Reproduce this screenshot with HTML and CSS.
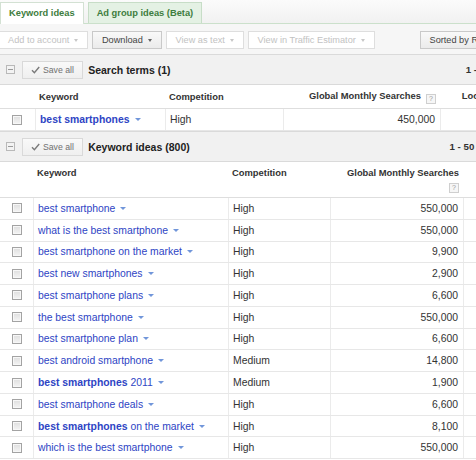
FILE: index.html
```html
<!DOCTYPE html>
<html>
<head>
<meta charset="utf-8">
<link rel="stylesheet" href="styles.css">
</head>
<body>
<div class="page">
  <div class="tabs">
    <div class="tab active">Keyword ideas</div>
    <div class="tab">Ad group ideas (Beta)</div>
  </div>

  <div class="toolbar">
    <span class="btn disabled first">Add to account<i class="caret"></i></span>
    <span class="btn">Download<i class="caret"></i></span>
    <span class="btn disabled">View as text<i class="caret"></i></span>
    <span class="btn disabled">View in Traffic Estimator<i class="caret"></i></span>
    <span class="btn sort">Sorted by Relevance<i class="caret"></i></span>
  </div>

  <div class="section-head">
    <span class="collapse"></span>
    <span class="save"><svg class="check" width="9" height="8" viewBox="0 0 9 8"><path d="M1 4.3 L3.4 6.8 L8.2 1" fill="none" stroke="#7a7a7a" stroke-width="1.4"/></svg>Save all</span>
    <span class="title">Search terms (1)</span>
    <span class="pager">1 - 1 of 1</span>
  </div>

  <div class="grid t1">
    <div class="hrow">
      <div class="hc"></div>
      <div class="hc">Keyword</div>
      <div class="hc">Competition</div>
      <div class="hc num">Global Monthly Searches <span class="help">?</span></div>
      <div class="hc num">Local Monthly Searches <span class="help">?</span></div>
    </div>
    <div class="row">
      <div class="c cb"><span class="box"></span></div>
      <div class="c"><a class="kw"><b>best smartphones</b><i class="dd"></i></a></div>
      <div class="c">High</div>
      <div class="c num">450,000</div>
      <div class="c num">135,000</div>
    </div>
  </div>

  <div class="section-head second">
    <span class="collapse"></span>
    <span class="save"><svg class="check" width="9" height="8" viewBox="0 0 9 8"><path d="M1 4.3 L3.4 6.8 L8.2 1" fill="none" stroke="#7a7a7a" stroke-width="1.4"/></svg>Save all</span>
    <span class="title">Keyword ideas (800)</span>
    <span class="pager">1 - 50 of 800</span>
  </div>

  <div class="grid t2">
    <div class="hrow tall">
      <div class="hc"></div>
      <div class="hc">Keyword</div>
      <div class="hc">Competition</div>
      <div class="hc num">Global Monthly Searches <span class="help">?</span></div>
      <div class="hc num">Local Monthly Searches <span class="help">?</span></div>
    </div>
    <div class="row"><div class="c cb"><span class="box"></span></div><div class="c"><a class="kw">best smartphone<i class="dd"></i></a></div><div class="c">High</div><div class="c num">550,000</div><div class="c num">165,000</div></div>
    <div class="row"><div class="c cb"><span class="box"></span></div><div class="c"><a class="kw">what is the best smartphone<i class="dd"></i></a></div><div class="c">High</div><div class="c num">550,000</div><div class="c num">165,000</div></div>
    <div class="row"><div class="c cb"><span class="box"></span></div><div class="c"><a class="kw">best smartphone on the market<i class="dd"></i></a></div><div class="c">High</div><div class="c num">9,900</div><div class="c num">3,600</div></div>
    <div class="row"><div class="c cb"><span class="box"></span></div><div class="c"><a class="kw">best new smartphones<i class="dd"></i></a></div><div class="c">High</div><div class="c num">2,900</div><div class="c num">1,300</div></div>
    <div class="row"><div class="c cb"><span class="box"></span></div><div class="c"><a class="kw">best smartphone plans<i class="dd"></i></a></div><div class="c">High</div><div class="c num">6,600</div><div class="c num">4,400</div></div>
    <div class="row"><div class="c cb"><span class="box"></span></div><div class="c"><a class="kw">the best smartphone<i class="dd"></i></a></div><div class="c">High</div><div class="c num">550,000</div><div class="c num">165,000</div></div>
    <div class="row"><div class="c cb"><span class="box"></span></div><div class="c"><a class="kw">best smartphone plan<i class="dd"></i></a></div><div class="c">High</div><div class="c num">6,600</div><div class="c num">4,400</div></div>
    <div class="row"><div class="c cb"><span class="box"></span></div><div class="c"><a class="kw">best android smartphone<i class="dd"></i></a></div><div class="c">Medium</div><div class="c num">14,800</div><div class="c num">6,600</div></div>
    <div class="row"><div class="c cb"><span class="box"></span></div><div class="c"><a class="kw"><b>best smartphones</b> 2011<i class="dd"></i></a></div><div class="c">Medium</div><div class="c num">1,900</div><div class="c num">880</div></div>
    <div class="row"><div class="c cb"><span class="box"></span></div><div class="c"><a class="kw">best smartphone deals<i class="dd"></i></a></div><div class="c">High</div><div class="c num">6,600</div><div class="c num">3,600</div></div>
    <div class="row"><div class="c cb"><span class="box"></span></div><div class="c"><a class="kw"><b>best smartphones</b> on the market<i class="dd"></i></a></div><div class="c">High</div><div class="c num">8,100</div><div class="c num">2,900</div></div>
    <div class="row"><div class="c cb"><span class="box"></span></div><div class="c"><a class="kw">which is the best smartphone<i class="dd"></i></a></div><div class="c">High</div><div class="c num">550,000</div><div class="c num">165,000</div></div>
  </div>
</div>
</body>
</html>
```

FILE: styles.css
```css
html, body {
  margin: 0;
  padding: 0;
  overflow: hidden;
  background: #fff;
}
body {
  font-family: "Liberation Sans", Arial, sans-serif;
  color: #333;
}
.page {
  width: 588px;
}

/* Tabs */
.tabs {
  display: flex;
  align-items: flex-end;
  gap: 4px;
  height: 24px;
  box-sizing: border-box;
  border-bottom: 1px solid #cbe0cb;
  background: linear-gradient(#fbfbfb, #f1f1f1);
}
.tab {
  box-sizing: border-box;
  height: 21px;
  padding: 0 8px;
  border: 1px solid #c7ddc7;
  border-bottom: 0;
  background: #e4f1e4;
  color: #3e7d3e;
  font-weight: bold;
  font-size: 9.3px;
  line-height: 20px;
  white-space: nowrap;
}
.tab.active {
  height: 22px;
  margin-bottom: -1px;
  line-height: 21px;
  background: #fff;
  border-color: #d3e1d3;
}

/* Toolbar */
.toolbar {
  display: flex;
  align-items: flex-start;
  gap: 4px;
  height: 30px;
  box-sizing: border-box;
  padding-top: 7px;
  background: #f6f6f6;
  white-space: nowrap;
}
.btn {
  display: inline-flex;
  align-items: center;
  gap: 5px;
  height: 18px;
  box-sizing: border-box;
  padding: 0 8.7px 0 9px;
  border: 1px solid #c9c9c9;
  background: linear-gradient(#f9f9f9, #ebebeb);
  color: #444;
  font-size: 9.2px;
}
.btn.disabled {
  border-color: #dedede;
  background: #fff;
  color: #c2c2c2;
}
.btn.first {
  margin-left: -2px;
}
.btn.sort {
  margin-left: 41px;
}
.caret {
  display: inline-block;
  width: 0;
  height: 0;
  border-left: 2.5px solid transparent;
  border-right: 2.5px solid transparent;
  border-top: 3px solid #666;
}
.btn.disabled .caret {
  border-top-color: #c8c8c8;
}

/* Section headers */
.section-head {
  display: flex;
  align-items: center;
  height: 31px;
  box-sizing: border-box;
  padding-left: 6px;
  border-top: 1px solid #dadada;
  border-bottom: 1px solid #dadada;
  background: #f1f1f1;
  white-space: nowrap;
}
.collapse {
  display: flex;
  align-items: center;
  justify-content: center;
  width: 9px;
  height: 9px;
  box-sizing: border-box;
  border: 1px solid #b9b9b9;
  background: #f3f3f3;
}
.collapse::after {
  content: "";
  display: block;
  width: 5px;
  height: 1px;
  background: #9a9a9a;
}
.save {
  display: inline-flex;
  align-items: center;
  gap: 3px;
  height: 18px;
  box-sizing: border-box;
  margin-left: 7.3px;
  padding: 0 7.7px;
  border: 1px solid #d9d9d9;
  background: linear-gradient(#f9f9f9, #efefef);
  color: #707070;
  font-size: 8.7px;
}
.check {
  display: block;
}
.title {
  margin-left: 5.6px;
  font-weight: bold;
  font-size: 10.5px;
  color: #222;
}
.pager {
  margin-left: auto;
  margin-right: 83px;
  font-weight: bold;
  font-size: 9.7px;
  color: #333;
}

/* Grids */
.t1 .hrow, .t1 .row {
  display: grid;
  grid-template-columns: 35px 130px 118px 157px 148px;
}
.t2 .hrow, .t2 .row {
  display: grid;
  grid-template-columns: 33px 195px 102px 133px 125px;
}
.hrow {
  height: 24px;
  box-sizing: border-box;
  border-bottom: 1px solid #dedede;
  align-items: center;
  font-weight: bold;
  font-size: 9.4px;
  color: #333;
}
.hrow.tall {
  height: 36px;
  align-items: start;
}
.hrow.tall .hc {
  padding-top: 5px;
}
.hc {
  padding: 0 4px;
  line-height: 12px;
}
.num {
  text-align: right;
}
.help {
  display: inline-block;
  width: 10px;
  height: 10px;
  box-sizing: border-box;
  margin-left: 2.4px;
  border: 1px solid #cfcfcf;
  background: #f6f6f6;
  color: #9a9a9a;
  font-weight: normal;
  font-size: 7px;
  line-height: 8px;
  text-align: center;
  vertical-align: -2px;
}
.row {
  height: 22px;
  box-sizing: border-box;
  border-bottom: 1px solid #e7e7e7;
  font-size: 10.4px;
  color: #333;
  white-space: nowrap;
}
.t2 .row {
  height: 21.78px;
}
.c {
  display: flex;
  align-items: center;
  padding: 0 4px;
  border-left: 1px solid #ebebeb;
  overflow: hidden;
}
.c.num {
  justify-content: flex-end;
  padding-right: 5px;
}
.c.cb {
  border-left: 0;
  padding-left: 11.5px;
}
.box {
  display: block;
  width: 10px;
  height: 10px;
  box-sizing: border-box;
  border: 1px solid #a3a3a3;
  background: linear-gradient(#dedede, #f4f4f4);
  box-shadow: inset 0 0 0 1px #f7f7f7;
}
.kw {
  color: #2e44c4;
  cursor: pointer;
}
.kw b {
  font-weight: bold;
}
.dd {
  display: inline-block;
  width: 0;
  height: 0;
  margin-left: 5px;
  border-left: 3px solid transparent;
  border-right: 3px solid transparent;
  border-top: 3.5px solid #7196da;
  vertical-align: 2px;
}
```
